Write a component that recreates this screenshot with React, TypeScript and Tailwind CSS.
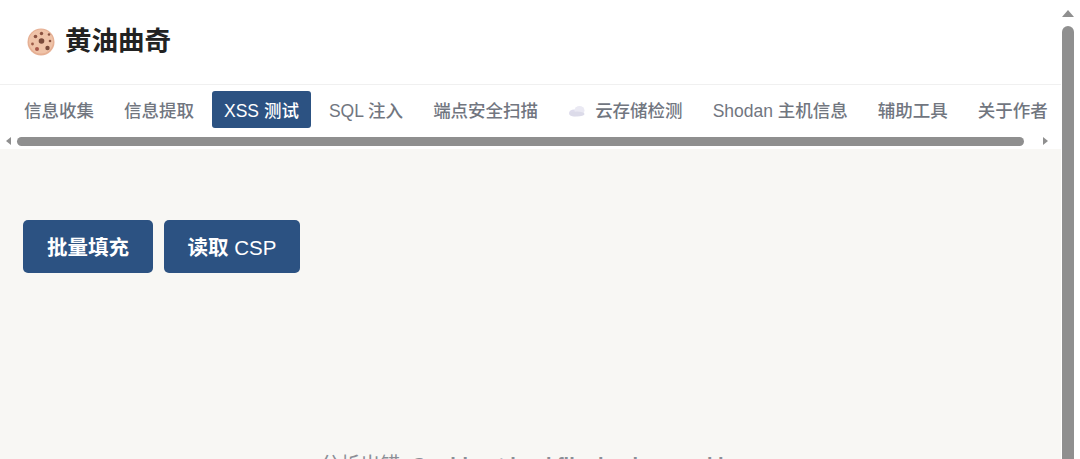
const font = { fontFamily: '"Liberation Sans","Noto Sans CJK SC",sans-serif' };

function Cookie() {
  return (
    <svg width="28" height="28" viewBox="0 0 28 28" className="shrink-0">
      <circle cx="14" cy="14" r="13.5" fill="#e6b094" />
      <circle cx="14" cy="13.5" r="12" fill="#efc3a8" />
      <circle cx="14.5" cy="13" r="2.8" fill="#7a4a3a" />
      <circle cx="14.5" cy="5.5" r="1.7" fill="#8a5240" />
      <circle cx="8.5" cy="8.5" r="1.8" fill="#8a5240" />
      <circle cx="22" cy="6.5" r="1.3" fill="#8a5240" />
      <circle cx="5.5" cy="16" r="1.4" fill="#9c5c48" />
      <circle cx="23" cy="13" r="1.3" fill="#8a5240" />
      <circle cx="10" cy="21" r="2" fill="#a8584a" />
      <circle cx="20.5" cy="20" r="2.2" fill="#7a4a3a" />
    </svg>
  );
}

function Cloud() {
  return (
    <svg width="18" height="12" viewBox="0 0 18 12" className="shrink-0">
      <ellipse cx="6" cy="8" rx="5" ry="3.6" fill="#dedcec" />
      <ellipse cx="11.5" cy="5.5" rx="5" ry="4.5" fill="#eae9f3" />
      <ellipse cx="9" cy="9" rx="7.5" ry="2.6" fill="#dcdbe9" />
    </svg>
  );
}

function Tab({ children, active }: { children: React.ReactNode; active?: boolean }) {
  return (
    <div
      className={
        active
          ? "h-[37px] px-3 pt-[3px] flex items-center gap-[9px] rounded-[3px] bg-[#2c5282] text-white text-[17.5px] font-medium whitespace-nowrap"
          : "h-[37px] px-3 pt-[3px] flex items-center gap-[9px] rounded-[3px] text-[#71767f] text-[17.5px] font-medium whitespace-nowrap"
      }
    >
      {children}
    </div>
  );
}

export default function App() {
  return (
    <div className="flex h-[459px] w-[1080px] overflow-hidden bg-white" style={font}>
      <div className="w-[1061px] shrink-0 flex flex-col">
        <div className="h-[84px] shrink-0 flex items-center gap-[10px] pl-[27px] border-b border-[#f0f0f0] box-content">
          <Cookie />
          <h1 className="text-[26.5px] font-bold text-[#222222]">黄油曲奇</h1>
        </div>
        <div className="h-[48px] shrink-0 flex items-start pt-[6px] pl-[12px] gap-[6px] overflow-hidden">
          <Tab>信息收集</Tab>
          <Tab>信息提取</Tab>
          <Tab active>XSS 测试</Tab>
          <Tab>SQL 注入</Tab>
          <Tab>端点安全扫描</Tab>
          <Tab>
            <Cloud />
            云存储检测
          </Tab>
          <Tab>Shodan 主机信息</Tab>
          <Tab>辅助工具</Tab>
          <Tab>关于作者</Tab>
        </div>
        <div className="h-[16px] shrink-0 flex items-center">
          <div className="w-[17px] flex justify-center">
            <div className="w-0 h-0 border-y-[4px] border-y-transparent border-r-[5px] border-r-[#8f8f8f]" />
          </div>
          <div className="w-[1007px] h-[9px] rounded-full bg-[#8f8f8f]" />
          <div className="flex-1 flex justify-center pl-[6px]">
            <div className="w-0 h-0 border-y-[4px] border-y-transparent border-l-[5px] border-l-[#8f8f8f]" />
          </div>
        </div>
        <div className="flex-1 min-h-0 bg-[#f8f7f4] overflow-hidden flex flex-col">
          <div className="flex gap-[11px] pl-[23px] pt-[71px]">
            <button className="h-[53px] w-[130px] pt-[3px] rounded-[5px] bg-[#2c5282] text-white text-[20.5px] font-bold">批量填充</button>
            <button className="h-[53px] w-[136px] pt-[3px] rounded-[5px] bg-[#2c5282] text-white text-[20.5px] font-medium">
              <span className="font-bold">读取</span> CSP
            </button>
          </div>
          <p className="mt-[178px] text-center text-[20px] leading-[28px] font-bold text-[#8b8f96] whitespace-nowrap pr-[6px]">
            <span className="font-normal">分析出错:</span> Could not load file: background.js
          </p>
        </div>
      </div>
      <div className="flex-1 flex flex-col items-center bg-white pt-[10px] pr-[6px]">
        <div className="w-0 h-0 border-x-[6px] border-x-transparent border-b-[7px] border-b-[#8f8f8f]" />
        <div className="mt-[9px] w-[12px] flex-1 rounded-t-full bg-[#8f8f8f]" />
      </div>
    </div>
  );
}
